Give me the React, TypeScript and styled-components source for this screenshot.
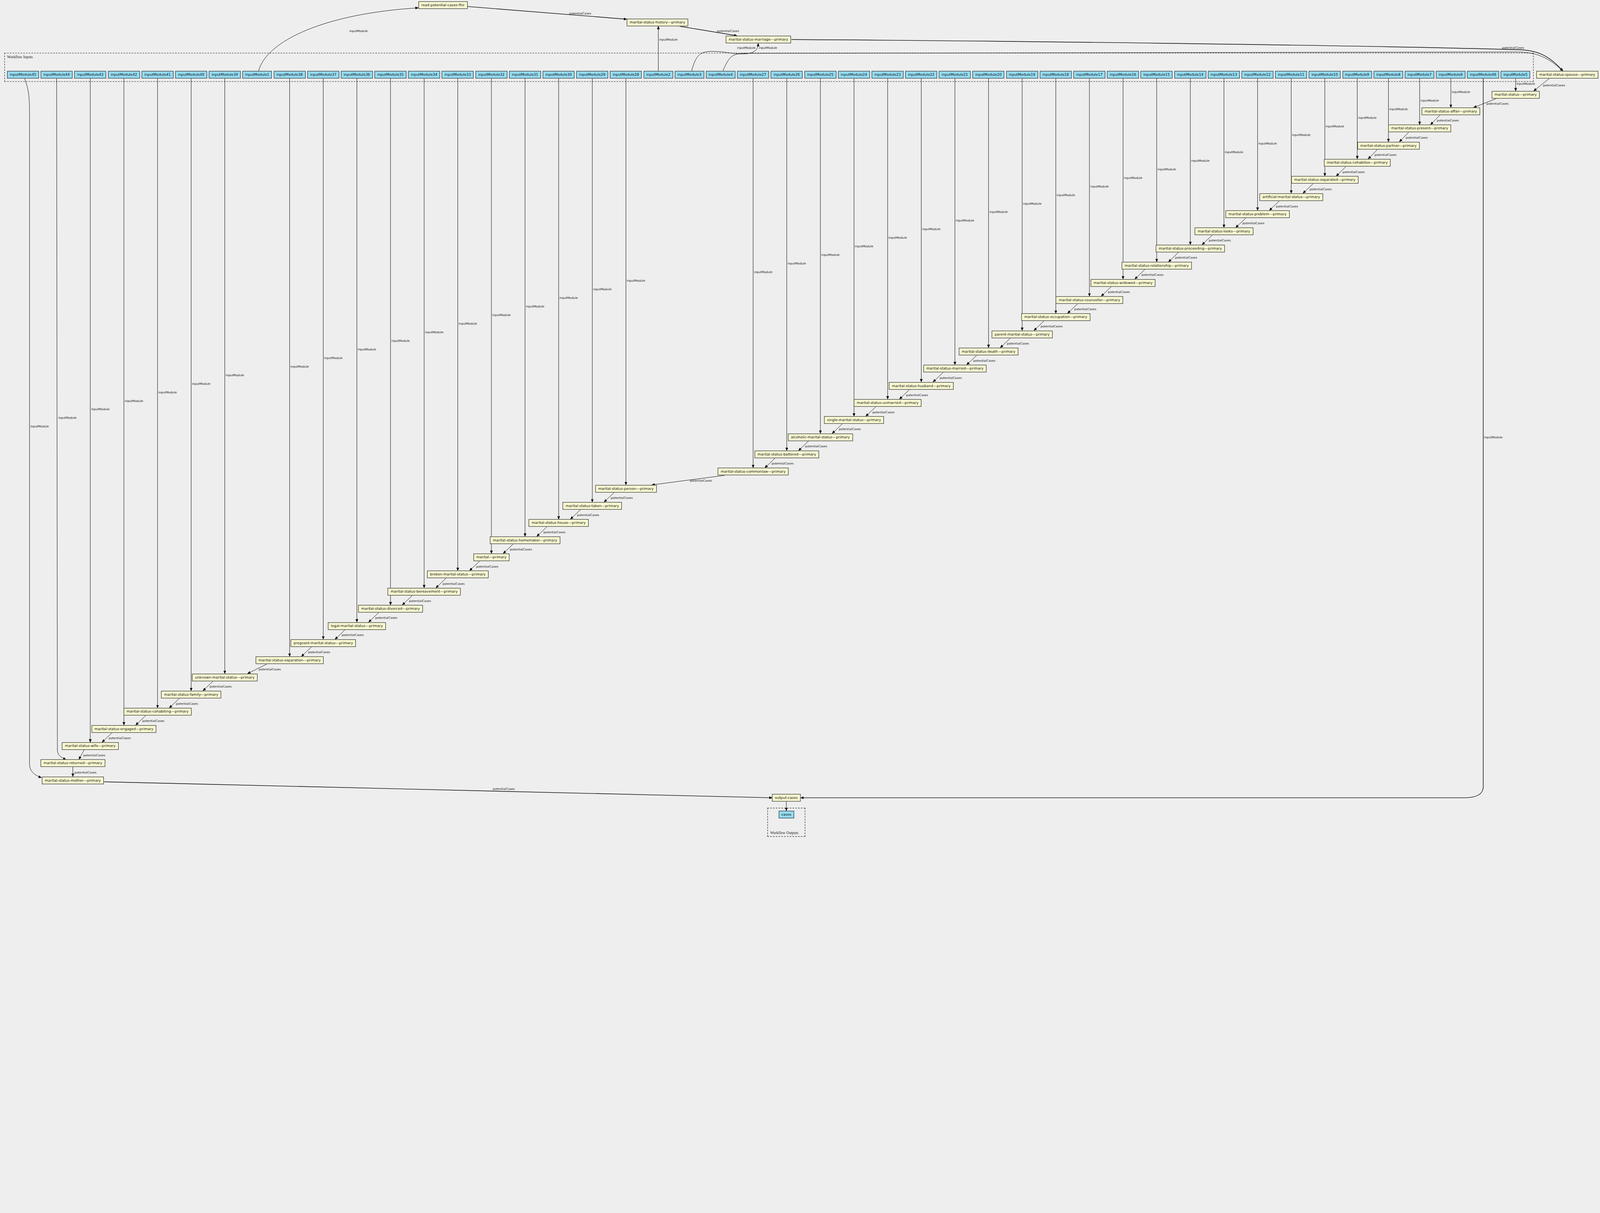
import React from "react";
import styled, { createGlobalStyle } from "styled-components";

const Global = createGlobalStyle`
  html, body { margin: 0; padding: 0; background: #eeeeee; overflow: hidden; }
`;

const Viewport = styled.div`
  width: 100vw;
  height: 100vh;
  overflow: hidden;
  background: #eeeeee;
`;

const Canvas = styled.div`
  position: relative;
  width: 5909px;
  height: 3105px;
  background: #eeeeee;
  transform-origin: 0 0;
  font-family: "DejaVu Sans", sans-serif;
`;

const Edges = styled.svg`
  position: absolute;
  left: 0;
  top: 0;
  width: 5909px;
  height: 3105px;
  pointer-events: none;
`;

const InputsGroup = styled.div`
  position: absolute;
  left: 16px;
  top: 195px;
  width: 5648px;
  height: 107px;
  box-sizing: border-box;
  border: 2px dashed #444;
  padding: 6px 8px 10px 8px;
  display: flex;
  flex-direction: column;
  justify-content: space-between;
`;

const InputsRow = styled.div`
  display: flex;
  gap: 6.2px;
  align-items: flex-end;
`;

const OutputsGroup = styled.div`
  position: absolute;
  left: 2834px;
  top: 2983px;
  width: 140px;
  height: 107px;
  box-sizing: border-box;
  border: 2px dashed #444;
  padding: 9px 8px 4px 8px;
  display: flex;
  flex-direction: column;
  justify-content: space-between;
  align-items: center;
`;

const GroupLabel = styled.span`
  align-self: flex-start;
  font-family: "Liberation Serif", "DejaVu Serif", serif;
  font-size: 14px;
  color: #222;
  white-space: nowrap;
`;

const Box = styled.div<{ $kind: "step" | "io"; $w?: number }>`
  height: 28px;
  box-sizing: border-box;
  padding: 0 9px;
  ${(p) => (p.$w ? `width: ${p.$w}px; padding: 0;` : "")}
  flex: none;
  border: 2px solid #444;
  background: ${(p) => (p.$kind === "io" ? "#94dcf4" : "#fafad2")};
  font-family: "DejaVu Sans", sans-serif;
  font-size: 13px;
  line-height: 24px;
  color: #111;
  white-space: nowrap;
  text-align: center;
`;

const Placed = styled(Box)`
  position: absolute;
  transform: translateX(-50%);
`;

const Label = styled.text`
  font-family: "DejaVu Sans", sans-serif;
  font-size: 11px;
  fill: #222;
`;

const FONT = "13px 'DejaVu Sans'";
let ctx: CanvasRenderingContext2D | null = null;
function textW(t: string) {
  if (!ctx && typeof document !== "undefined") ctx = document.createElement("canvas").getContext("2d");
  if (ctx) {
    ctx.font = FONT;
    return ctx.measureText(t).width;
  }
  return t.length * 6.6;
}
const boxW = (t: string) => Math.round(textW(t) + 22);

const inputOrder = [45, 44, 43, 42, 41, 40, 39, 1, 38, 37, 36, 35, 34, 33, 32, 31, 30, 29, 28, 2, 3, 4, 27, 26, 25, 24, 23, 22, 21, 20, 19, 18, 17, 16, 15, 14, 13, 12, 11, 10, 9, 8, 7, 6, 46, 5];
const inputX: Record<number, number> = {};
const inputWd: Record<number, number> = {};
{
  let x = 26;
  for (const n of inputOrder) {
    const w = n >= 10 ? 118 : 109;
    inputX[n] = x + w / 2;
    inputWd[n] = w;
    x += w + 6.2;
  }
}
const IN_TOP = 262;
const IN_BOT = 290;

const ms = (s: string) => `marital-status-${s}---primary`;
const chainDefs: [string, number | undefined, number | undefined][] = [
  [ms("spouse"), undefined, 5788],
  ["marital-status---primary", 5, undefined],
  [ms("affair"), 6, undefined],
  [ms("present"), 7, undefined],
  [ms("partner"), 8, undefined],
  [ms("cohabitee"), 9, undefined],
  [ms("separated"), 10, undefined],
  ["artificial-marital-status---primary", 11, undefined],
  [ms("problem"), 12, undefined],
  [ms("looks"), 13, undefined],
  [ms("proceeding"), 14, undefined],
  [ms("relationship"), 15, undefined],
  [ms("widowed"), 16, undefined],
  [ms("counsellor"), 17, undefined],
  [ms("occupation"), 18, undefined],
  ["parent-marital-status---primary", 19, undefined],
  [ms("death"), 20, undefined],
  [ms("married"), 21, undefined],
  [ms("husband"), 22, undefined],
  [ms("unmarried"), 23, undefined],
  ["single-marital-status---primary", 24, undefined],
  ["alcoholic-marital-status---primary", 25, undefined],
  [ms("battered"), 26, undefined],
  [ms("commonlaw"), 27, undefined],
  [ms("person"), 28, undefined],
  [ms("taken"), 29, undefined],
  [ms("house"), 30, undefined],
  [ms("homemaker"), 31, undefined],
  ["marital---primary", 32, undefined],
  ["broken-marital-status---primary", 33, undefined],
  [ms("bereavement"), 34, undefined],
  [ms("divorced"), 35, undefined],
  ["legal-marital-status---primary", 36, undefined],
  ["pregnant-marital-status---primary", 37, undefined],
  [ms("separation"), 38, undefined],
  ["unknown-marital-status---primary", 39, undefined],
  [ms("family"), 40, undefined],
  [ms("cohabiting"), 41, undefined],
  [ms("engaged"), 42, undefined],
  [ms("wife"), 43, undefined],
  [ms("returned"), 44, 269],
  [ms("mother"), 45, 269],
];

type Placement = { name: string; x: number; top: number; w: number; input?: number };
function buildChain(): Placement[] {
  return chainDefs.map(([name, input, cx], i) => {
    const top = i === 0 ? 262 : i === 1 ? 336 : 397 + (i - 2) * 63.35;
    const x = cx ?? inputX[input as number];
    return { name, input, top, x, w: boxW(name) };
  });
}

const tops: Placement[] = [
  { name: "read-potential-cases-fhir", x: 1636, top: 5, w: 0 },
  { name: ms("history"), x: 2428, top: 69, w: 0 },
  { name: ms("marriage"), x: 2801, top: 132, w: 0 },
  { name: "output-cases", x: 2904, top: 2932, w: 0 },
];

type Ed = { d: string; lbl?: { x: number; y: number; t: string }; thick?: boolean };

function buildEdges(chain: Placement[]): Ed[] {
  const e: Ed[] = [];
  for (let i = 0; i < chain.length - 1; i++) {
    const a = chain[i];
    const b = chain[i + 1];
    const dx = Math.abs(a.x - b.x);
    const x1 = dx < 5 ? a.x : a.x - Math.min(0.4 * a.w, Math.max(0.1 * a.w, dx * 0.35));
    const x2 = dx < 5 ? b.x : b.x + Math.min(0.42 * b.w, Math.max(0.08 * b.w, dx * 0.35));
    const sy = a.top + 28;
    const ey = b.top;
    e.push({
      d: `M${x1},${sy} L${x2},${ey}`,
      lbl: { x: (x1 + x2) / 2 + 6, y: (sy + ey) / 2 + 6, t: "potentialCases" },
    });
  }
  for (const c of chain) {
    if (!c.input) continue;
    const ix = inputX[c.input];
    const mid = (IN_BOT + c.top) / 2;
    if (c.input === 45) {
      e.push({
        d: `M${ix + 6},${IN_BOT} C${ix + 20},330 109,350 109,420 L109,2820 C109,2850 128,2862 153,2872`,
        lbl: { x: 112, y: mid, t: "inputModule" },
      });
    } else if (c.input === 44) {
      e.push({
        d: `M${ix},${IN_BOT} L212,2770 C212,2790 228,2798 244,2805`,
        lbl: { x: 215, y: mid, t: "inputModule" },
      });
    } else {
      e.push({ d: `M${ix},${IN_BOT} L${c.x},${c.top}`, lbl: { x: ix + 3, y: mid, t: "inputModule" } });
    }
  }
  e.push({ d: `M${inputX[1] + 5},${IN_TOP} C985,150 1200,50 1545,29`, lbl: { x: 1290, y: 118, t: "inputModule" } });
  e.push({ d: `M1727,24 L2315,71`, lbl: { x: 2102, y: 53, t: "potentialCases" }, thick: true });
  e.push({ d: `M${inputX[2]},${IN_TOP} L${inputX[2]},97`, lbl: { x: inputX[2] + 3, y: 150, t: "inputModule" } });
  e.push({ d: `M2510,97 L2722,132`, lbl: { x: 2648, y: 118, t: "potentialCases" }, thick: true });
  e.push({
    d: `M${inputX[3] + 8},${IN_TOP} C2570,200 2590,192 2620,190 C2680,188 2710,203 2760,198 C2790,194 2800,180 2800,160`,
    lbl: { x: 2722, y: 181, t: "inputModule" },
  });
  e.push({
    d: `M${inputX[4] + 8},${IN_TOP} C2690,215 2700,200 2740,197 L5600,192 C5680,192 5720,215 5772,262`,
    lbl: { x: 2802, y: 181, t: "inputModule" },
  });
  e.push({
    d: `M2923,146 C3600,150 5000,166 5620,184 C5690,188 5730,215 5772,262`,
    lbl: { x: 5547, y: 181, t: "potentialCases" },
    thick: true,
  });
  e.push({ d: `M385,2887 L2852,2946`, lbl: { x: 1820, y: 2917, t: "potentialCases" }, thick: true });
  const x46 = inputX[46];
  e.push({
    d: `M${x46},${IN_BOT} L${x46},2905 C${x46},2935 ${x46 - 30},2946 ${x46 - 70},2946 L2957,2946`,
    lbl: { x: x46 + 3, y: 1618, t: "inputModule" },
    thick: true,
  });
  e.push({ d: `M2904,2960 L2904,2994` });
  return e;
}

function useFitScale() {
  const get = () => (typeof window === "undefined" ? 1 : Math.min(1, window.innerWidth / 5909));
  const [s, setS] = React.useState(get);
  React.useEffect(() => {
    const on = () => setS(get());
    window.addEventListener("resize", on);
    return () => window.removeEventListener("resize", on);
  }, []);
  return s;
}

export default function App() {
  const chain = React.useMemo(buildChain, []);
  const edges = React.useMemo(() => buildEdges(chain), [chain]);
  const scale = useFitScale();
  const placed = [...chain, ...tops];
  return (
    <>
      <Global />
      <Viewport>
        <Canvas style={{ transform: `scale(${scale})` }}>
          <InputsGroup>
            <GroupLabel>Workflow Inputs</GroupLabel>
            <InputsRow>
              {inputOrder.map((n) => (
                <Box key={n} $kind="io" $w={inputWd[n]}>
                  inputModule{n}
                </Box>
              ))}
            </InputsRow>
          </InputsGroup>
          <OutputsGroup>
            <Box $kind="io" $w={57}>
              cases
            </Box>
            <GroupLabel>Workflow Outputs</GroupLabel>
          </OutputsGroup>
          <Edges viewBox="0 0 5909 3105">
            <defs>
              <marker id="ah" markerUnits="userSpaceOnUse" markerWidth="12" markerHeight="10" refX="11" refY="5" orient="auto">
                <path d="M0,0 L12,5 L0,10 z" fill="#000" />
              </marker>
            </defs>
            {edges.map((ed, i) => (
              <g key={i}>
                <path d={ed.d} fill="none" stroke="#000" strokeWidth={ed.thick ? 2 : 1.4} markerEnd="url(#ah)" />
                {ed.lbl && (
                  <Label x={ed.lbl.x} y={ed.lbl.y}>
                    {ed.lbl.t}
                  </Label>
                )}
              </g>
            ))}
          </Edges>
          {placed.map((c) => (
            <Placed key={c.name} $kind="step" style={{ left: c.x, top: c.top }}>
              {c.name}
            </Placed>
          ))}
        </Canvas>
      </Viewport>
    </>
  );
}
